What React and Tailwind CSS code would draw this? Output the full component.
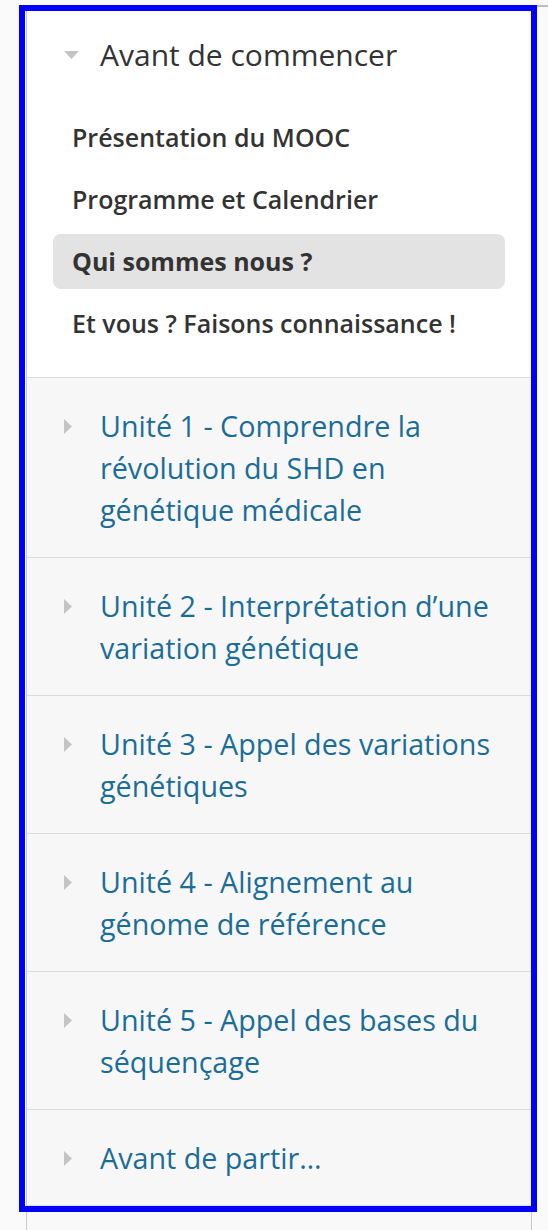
import React from "react";

const units = [
  "Unité 1 - Comprendre la révolution du SHD en génétique médicale",
  "Unité 2 - Interprétation d’une variation génétique",
  "Unité 3 - Appel des variations génétiques",
  "Unité 4 - Alignement au génome de référence",
  "Unité 5 - Appel des bases du séquençage",
  "Avant de partir…",
];

const items = [
  { label: "Présentation du MOOC", active: false },
  { label: "Programme et Calendrier", active: false },
  { label: "Qui sommes nous ?", active: true },
  { label: "Et vous ? Faisons connaissance !", active: false },
];

function TriangleDown() {
  return (
    <svg width="15" height="8" viewBox="0 0 15 8" className="block">
      <polygon points="0,0 15,0 7.5,8" fill="#c4c4c4" />
    </svg>
  );
}

function TriangleRight() {
  return (
    <svg width="8" height="15" viewBox="0 0 8 15" className="block">
      <polygon points="0,0 8,7.5 0,15" fill="#c4c4c4" />
    </svg>
  );
}

export default function App() {
  return (
    <div
      className="relative w-[548px] h-[1230px] bg-[#fafafa] overflow-hidden"
      style={{ fontFamily: '"Open Sans", "Noto Sans", sans-serif' }}
    >
      <div className="absolute left-[537px] top-[5px] w-[20px] h-[2px] bg-[#bdbdbd]" />
      <div className="ml-[26px] mt-[6px] w-[506px] min-h-[1224px] border-x border-t border-[#c8c8c8] bg-[#f9f9f9]">
        <div className="bg-white pt-[27px] pb-[26px]">
          <div className="flex items-center pl-[37px] h-[42px]">
            <div className="w-[36px] flex items-center">
              <TriangleDown />
            </div>
            <span className="text-[30px] leading-[42px] text-[#333333]">
              Avant de commencer
            </span>
          </div>
          <ul className="mt-[34px] mx-[26px] flex flex-col gap-[7px]">
            {items.map((it) => (
              <li
                key={it.label}
                className={
                  it.active
                    ? "h-[55px] flex items-center pl-[19px] rounded-[8px] bg-[#e3e3e3] text-[25px] font-bold text-[#333333]"
                    : "h-[55px] flex items-center pl-[19px] rounded-[8px] text-[25px] font-semibold text-[#333333]"
                }
              >
                {it.label}
              </li>
            ))}
          </ul>
        </div>
        {units.map((u) => (
          <div
            key={u}
            className="flex border-t border-[#dcdcdc] bg-[#f7f7f7] pl-[37px] pr-[26px] pt-[27px] pb-[26px]"
          >
            <div className="w-[36px] shrink-0 pt-[14px]">
              <TriangleRight />
            </div>
            <div className="text-[28.7px] leading-[42px] text-[#1b6d99]">{u}</div>
          </div>
        ))}
        <div className="border-t border-[#dcdcdc] h-[40px] bg-[#f9f9f9]" />
      </div>
      <div className="absolute left-[19px] top-[5px] w-[518px] h-[1207px] border-[6px] border-[#0000ff] pointer-events-none" />
    </div>
  );
}
